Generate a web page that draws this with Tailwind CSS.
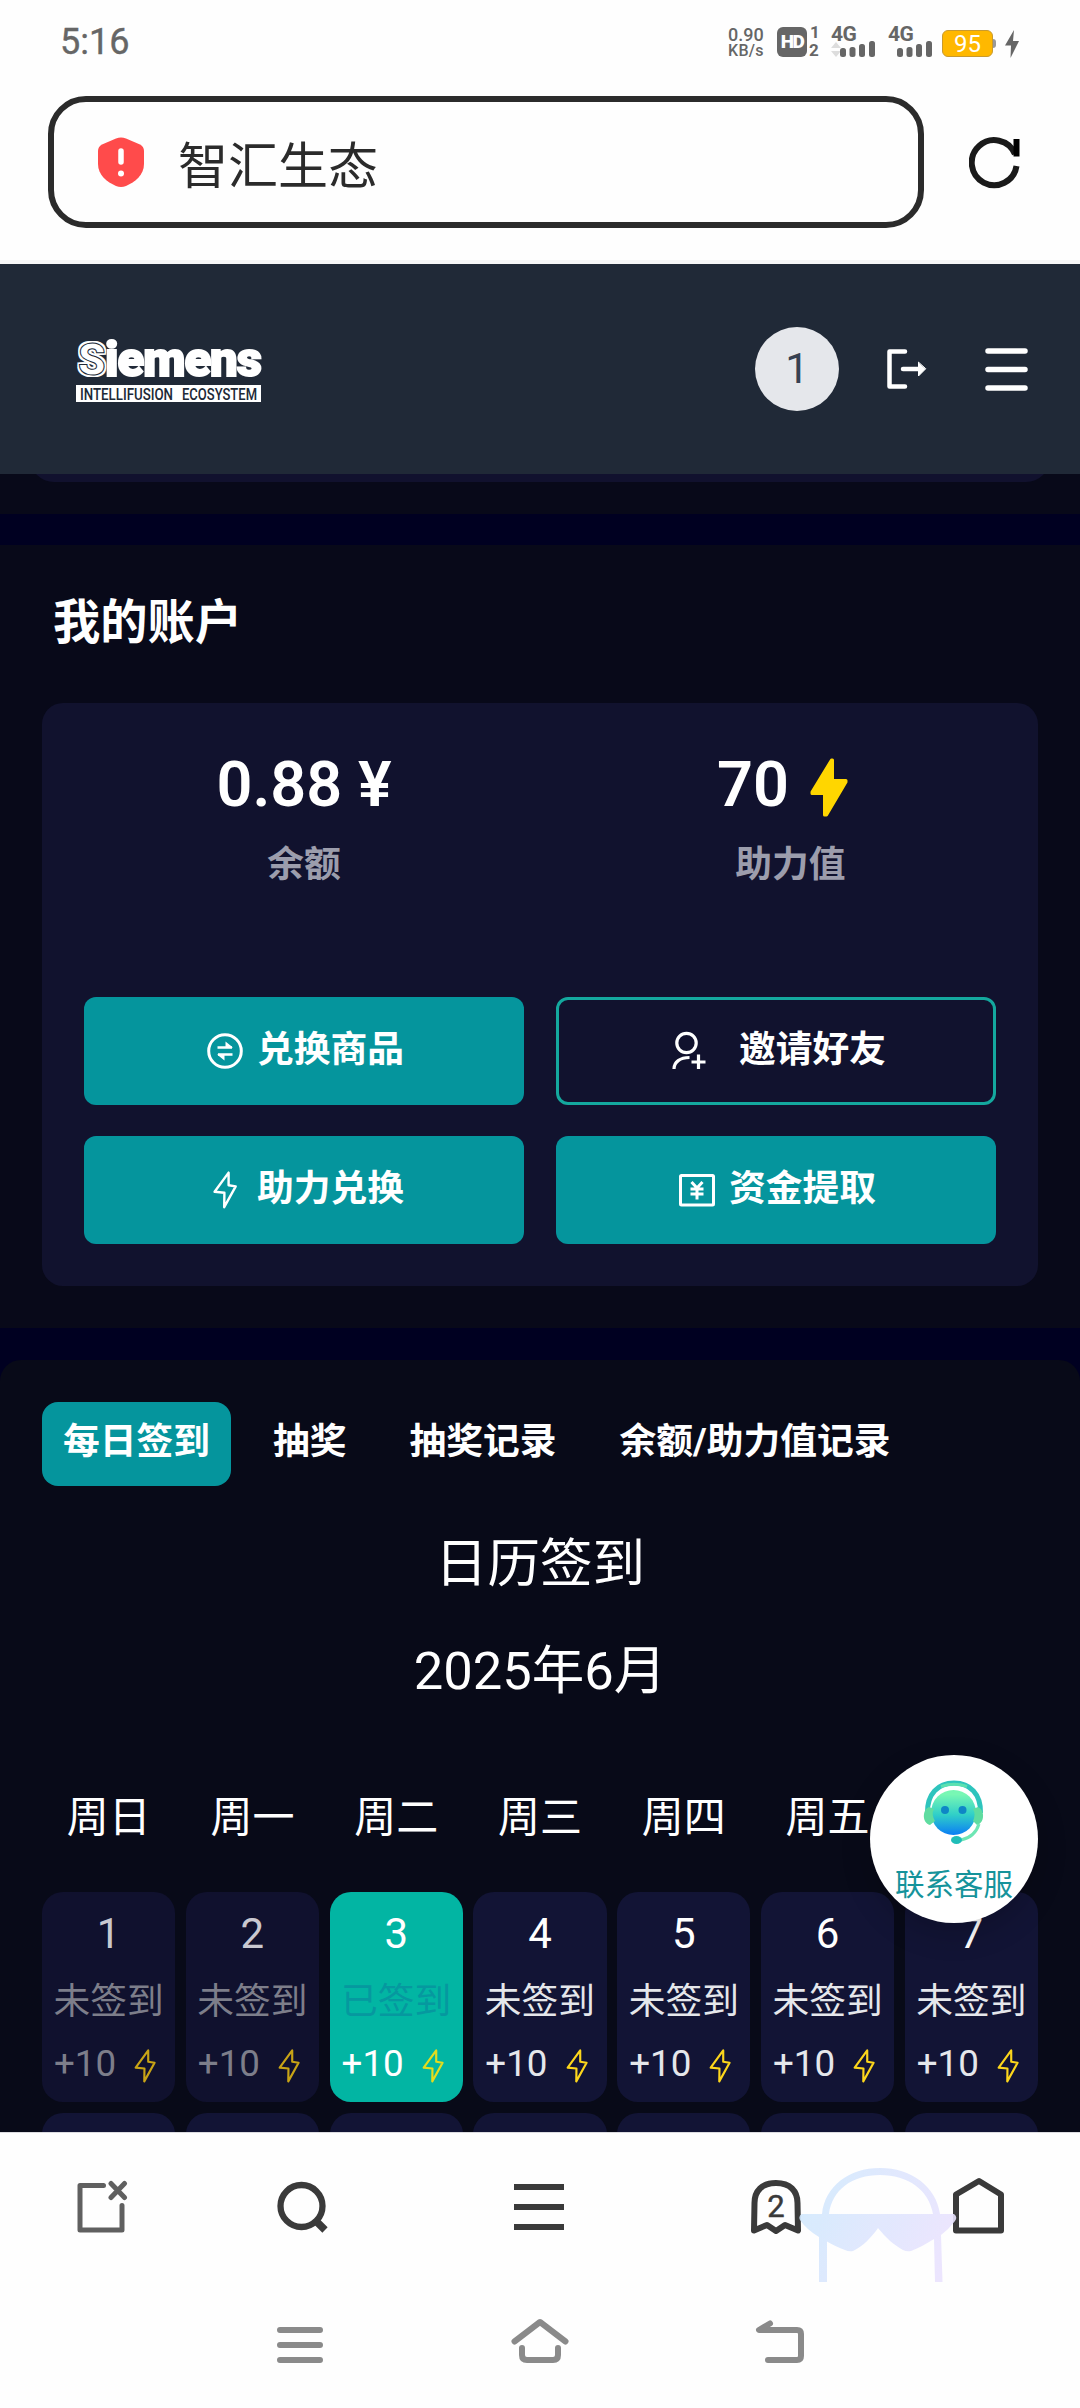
<!DOCTYPE html>
<html lang="zh-CN">
<head>
<meta charset="utf-8">
<title>智汇生态</title>
<script src="https://cdn.jsdelivr.net/npm/@tailwindcss/browser@4"></script>
</head>
<body class="w-[1080px] h-[2408px] overflow-hidden bg-[#fefefe] font-['Roboto','Noto_Sans_CJK_SC',sans-serif] text-white flex flex-col relative">
<svg class="hidden">
  <symbol id="bolt" viewBox="0 0 24 38"><path d="M15.6 1.6V14.2L22.7 15.4 11.2 36.2 11.4 21.8 1.6 20.8Z" fill="none" stroke="currentColor" stroke-width="2.4" stroke-linejoin="round"/></symbol>
</svg>

<!-- status bar -->
<div class="h-24 shrink-0 flex text-[#666]">
  <div class="w-[728px] pl-[60px] pt-[21px] text-[36px] leading-[42px] [-webkit-text-stroke:0.400px_#666]">5:16</div>
  <div class="w-[49px] pt-[25px] font-medium text-[18px] leading-[19px] whitespace-nowrap">0.90<div class="text-[16px] leading-[14px] tracking-[0.3px]">KB/s</div></div>
  <div class="w-[30px] h-[30px] mt-[27px] rounded-[6px] bg-[#666] text-[#fefefe] font-black text-[19px] leading-[30px] text-center tracking-[-1.500px]">HD</div>
  <div class="w-[24px] pl-[2px] pt-[23px] font-bold text-[17px] leading-[18px]"><span class="pl-[1px]">1</span><div class="leading-[18px]">2</div></div>
  <div class="w-[57px] mt-[25px] relative font-bold text-[21px] leading-[19px] tracking-[-0.5px]">4G
    <svg class="absolute left-0 top-[16px]" width="46" height="18" fill="#666"><path d="M0 7l5-6 5 6zM0 10h10l-5 6z" fill="#ddd"/><rect x="9" y="7" width="6" height="9" rx="2.5"/><rect x="18.500" y="6" width="6" height="10" rx="2.500"/><rect x="28" y="3" width="6" height="13" rx="2.500"/><rect x="38" y="0" width="6" height="16" rx="2.500"/></svg>
  </div>
  <div class="w-[54px] mt-[25px] relative font-bold text-[21px] leading-[19px] tracking-[-0.5px]">4G
    <svg class="absolute left-0 top-[16px]" width="46" height="18" fill="#666"><rect x="9" y="7" width="6" height="9" rx="2.500"/><rect x="18.500" y="6" width="6" height="10" rx="2.500"/><rect x="28" y="3" width="6" height="13" rx="2.500"/><rect x="38" y="0" width="6" height="16" rx="2.500"/></svg>
  </div>
  <div class="w-[51px] h-[27px] mt-[30px] rounded-[6px] bg-[#ffb800] border border-[#c99a2e] text-white text-[24px] leading-[26px] text-center">95</div>
  <div class="w-[3px] h-[9px] mt-[39px] rounded-r-[3px] bg-[#999]"></div>
  <svg class="mt-[30px] ml-[9px]" width="15" height="28" fill="#666"><path d="M9 0L0 15.500H6L5.500 28 14 11H8Z"/></svg>
</div>

<!-- address bar -->
<div class="h-[168px] shrink-0 flex pl-12 border-b-[4px] border-[#f6f6f6]">
  <div class="w-[876px] h-[132px] border-[6px] border-[#2b2b2b] rounded-[38px] flex items-center pl-[44px]">
    <svg width="46" height="52" viewBox="0 0 46 52"><path d="M18 2.500Q23 .5 28 2.500L42 8.500Q46 10.500 46 15V28C46 39 37 46 28 50Q23 52 18 50C9 46 0 39 0 28V15Q0 10.500 4 8.500Z" fill="#ff4b4b"/><path d="M23 15v11" stroke="#fff" stroke-width="5.500" stroke-linecap="round"/><circle cx="23" cy="37.500" r="3" fill="#fff"/></svg>
    <div class="ml-[34px] mt-[9px] text-[50px] leading-[60px] text-[#2b2b2b]">智汇生态</div>
  </div>
  <svg class="ml-[45px] mt-[40px]" width="54" height="54" fill="none" stroke="#1a1a1a" stroke-width="6"><path d="M46 18A22.500 22.500 0 1 0 47.500 30"/><path d="M47.500 3V20.500" stroke="#000"/></svg>
</div>

<!-- site header -->
<header class="h-[210px] shrink-0 bg-[#202937] flex items-center">
  <div class="w-[185px] ml-[76px] flex flex-col mt-[4px]">
    <div class="h-[40px] flex items-end whitespace-nowrap leading-[40px] font-black">
      <span class="w-[29px] pl-[2px] h-[40px] inline-block text-[44px] [-webkit-text-stroke:1px_#202937] [text-shadow:2px_0_#fff,-2px_0_#fff,0_2px_#fff,0_-2px_#fff,2px_2px_#fff,-2px_-2px_#fff,2px_-2px_#fff,-2px_2px_#fff]">S</span>
      <span class="h-[40px] text-[49px] tracking-[-1px] [-webkit-text-stroke:2px_#fff]">iemens</span>
    </div>
    <svg class="mt-[5px] overflow-visible" width="185" height="17"><rect width="185" height="17" fill="#fff"/><text x="4" y="14.500" font-size="16.500" font-weight="500" fill="#202937" textLength="93" lengthAdjust="spacingAndGlyphs">INTELLIFUSION</text><text x="106" y="14.500" font-size="16.500" font-weight="500" fill="#202937" textLength="75" lengthAdjust="spacingAndGlyphs">ECOSYSTEM</text></svg>
  </div>
  <div class="ml-[494px] w-[84px] h-[84px] rounded-full bg-[#e5e7eb] text-[#374151] text-[42px] leading-[83px] text-center">1</div>
  <svg class="ml-[46px]" width="44" height="44" fill="none" stroke="#fff" stroke-width="4.500" stroke-linecap="round" stroke-linejoin="round"><path d="M20 4.500H4.500V39.500H20M18 22H34"/><path d="M33.500 15.500V29L40.500 22Z" fill="#fff" stroke-width="1"/></svg>
  <svg class="ml-[56px]" width="46" height="46" stroke="#fff" stroke-width="5.500" stroke-linecap="round"><path d="M3 5H40M3 23.500H40M3 42H40"/></svg>
</header>

<main class="h-[1658px] shrink-0 overflow-hidden bg-[#000021]">
  <div class="h-[40px] bg-[#080919] px-[30px]"><div class="h-[8px] overflow-hidden flex flex-col justify-end"><div class="h-[60px] shrink-0 rounded-[24px] bg-[#11112e]"></div></div></div>

  <!-- account -->
  <section class="mt-[31px] h-[783px] bg-[#080919] px-[42px] pt-[48px]">
    <h2 class="pl-[11px] h-[110px] text-[47.250px] leading-[60px] font-bold">我的账户</h2>
    <div class="h-[583px] rounded-[21px] bg-[#11122e] px-[42px] pt-[42px]">
      <div class="h-[252px] flex text-center">
        <div class="w-[440px] font-semibold">
          <div class="pt-[2px] text-[63px] leading-[76px] whitespace-nowrap">0.88 ¥</div>
          <div class="mt-[14px] text-[36.750px] leading-[56px] font-bold text-[#9c9dac]">余额</div>
        </div>
        <div class="w-[440px] ml-[32px] font-semibold">
          <div class="pt-[2px] text-[63px] leading-[76px] flex items-center justify-center pl-[13px]">70<svg class="ml-[21px] mt-[5px]" width="38" height="60" fill="#ffd600" stroke="#ffd600" stroke-width="3" stroke-linejoin="round"><path d="M21.500 2L2 34V35.500H14.500V57H16.500L36 24V22.500H22.500V2Z"/></svg></div>
          <div class="mt-[14px] pl-[29px] text-[36.750px] leading-[56px] font-bold text-[#9c9dac]">助力值</div>
        </div>
      </div>
      <div class="grid grid-cols-2 gap-x-8 gap-y-[31px] text-[36.750px] font-bold leading-[105px] whitespace-nowrap">
        <div class="h-[108px] rounded-[12px] bg-[#05959d] flex pl-[123px]"><svg class="mt-[36px] mr-[14px]" width="36" height="36" fill="none" stroke="#fff" stroke-width="3"><circle cx="18" cy="18" r="16.300"/><path d="M10.500 14.500H25M11 21.500H25.500" stroke-width="2.400"/><path d="M18.500 8.500V14.500H26ZM17.500 27.500V21.500H10Z" fill="#fff" stroke="none"/></svg>兑换商品</div>
        <div class="h-[108px] rounded-[12px] border-[3px] border-[#14a89e] flex pl-[113px] leading-[99px]"><svg class="mt-[31px] mr-[33px]" width="34" height="38" fill="none" stroke="#fff" stroke-width="3.200"><circle cx="14.500" cy="12" r="9.700"/><path d="M2 38C2 31 8 26.500 17.500 26.500M26.500 23.500V38M19.500 31H33.500"/></svg>邀请好友</div>
        <div class="h-[108px] rounded-[12px] bg-[#05959d] flex pl-[129px] leading-[106px]"><svg class="mt-[35px] mr-[20px]" width="24" height="38"><use href="#bolt"/></svg>助力兑换</div>
        <div class="h-[108px] rounded-[12px] bg-[#05959d] flex pl-[123px] leading-[106px]"><svg class="mt-[38px] mr-[14px]" width="36" height="33" fill="none" stroke="#fff" stroke-width="3"><rect x="1.500" y="1.500" width="33" height="29.500" rx="1"/><path d="M12.500 8L18 14 23.500 8M11.500 15H24.500M11.500 20H24.500M18 14V25.500"/></svg>资金提取</div>
      </div>
    </div>
  </section>

  <!-- check-in -->
  <section class="mt-[32px] h-[900px] bg-[#080a18] rounded-t-[21px] px-[42px] pt-[42px]">
    <div class="h-[84px] flex gap-[21px] text-[36.750px] font-bold leading-[79px] whitespace-nowrap">
      <div class="px-[21px] rounded-[16px] bg-[#05959d]">每日签到</div>
      <div class="px-[21px]">抽奖</div>
      <div class="px-[21px]">抽奖记录</div>
      <div class="px-[21px]">余额/助力值记录</div>
    </div>
    <div class="mt-[41px] text-center text-[52.500px] leading-[74px]">日历签到</div>
    <div class="mt-[33px] text-center text-[52.500px] leading-[74px]">2025年6月</div>
    <div class="mt-[78px] grid grid-cols-7 gap-x-[10.500px] h-[106px] text-[42px] leading-[63px] text-center">
      <div>周日</div><div>周一</div><div>周二</div><div>周三</div><div>周四</div><div>周五</div><div>周六</div>
    </div>
    <div id="days" class="grid grid-cols-7 gap-x-[10.500px] gap-y-[11px] text-center whitespace-nowrap"></div>
  </section>
</main>

<!-- browser toolbar -->
<div class="h-[168px] shrink-0 border-t border-[#dcdce0] flex items-start">
  <svg class="ml-[76px] mt-[46px]" width="52" height="58" fill="none" stroke="#606060" stroke-width="5" stroke-linecap="round" stroke-linejoin="round"><path d="M27.500 6.500H4V51H46V26.500M35 4.500L48.500 18.500M48.500 4.500L35 18.500"/></svg>
  <svg class="ml-[149px] mt-[46px]" width="54" height="58" fill="none" stroke="#3a3a3a" stroke-width="6.300"><circle cx="24.500" cy="27" r="21"/><path d="M38 41L48 51" stroke-width="7.500"/></svg>
  <svg class="ml-[183px] mt-[51px]" width="50" height="48" fill="#3a3a3a"><path d="M0 0H50V6H0zM0 20H50V26H0zM0 40H50V46H0z"/></svg>
  <div class="ml-[186px] mt-[45px] w-[52px] h-[58px] relative text-[#3a3a3a] text-[31px] leading-[57px] text-center [-webkit-text-stroke:0.500px_#3a3a3a]">2<svg class="absolute left-0 top-0" width="52" height="58" fill="none" stroke="#3a3a3a" stroke-width="6" stroke-linejoin="round"><path d="M26 5C12 5 4.500 13 4.500 25L4 52.500 17 47 26 53 35 47 48 52.500 47.500 25C47.500 13 40 5 26 5Z"/></svg></div>
  <svg class="ml-[150px] mt-[43px]" width="54" height="60" fill="none" stroke="#3a3a3a" stroke-width="6" stroke-linejoin="round"><path d="M27 5L49 18.500V54.500H4V18.500Z"/></svg>
</div>

<!-- system navigation -->
<div class="h-[108px] shrink-0 flex items-start pl-[274px] text-[#8a8a8a]">
  <svg class="mt-[17px]" width="52" height="50" stroke="currentColor" stroke-width="6" stroke-linecap="round"><path d="M6 13H46M6 28H46M6 43H46"/></svg>
  <svg class="ml-[182px] mt-[17px]" width="64" height="50" fill="none" stroke="currentColor" stroke-width="6" stroke-linecap="round" stroke-linejoin="round"><path d="M6.500 24.500L32 5 57.500 24.500M14 31V38Q14 43 19 43H45Q50 43 50 38V31"/></svg>
  <svg class="ml-[180px] mt-[17px]" width="56" height="50" fill="none" stroke="currentColor" stroke-width="6" stroke-linecap="round" stroke-linejoin="round"><path d="M18 6.500L7 13H45Q49 13 49 17V39Q49 43 45 43H16"/></svg>
</div>

<!-- floating mask figure over the toolbar -->
<svg class="absolute left-[799px] top-[2166px]" width="158" height="122"><defs><linearGradient id="mk" x1="0" y1="0" x2="158" y2="70" gradientUnits="userSpaceOnUse"><stop offset=".1" stop-color="#d2e9fd"/><stop offset="1" stop-color="#ebe3fe"/></linearGradient></defs>
  <g opacity=".9"><path d="M23 48C26 20 50 2 81 2S137 20 141 48H134C130 24 109 9 81 9S33 24 30 48Z" fill="url(#mk)"/><path d="M3 48H155Q159 51 156 55 150 63 142 69L143.500 116H136L135 73C127 78 120 82 112 85Q108 86 104 84C95 79 87 72 79 62 72 72 64 80 54 85Q50 86 46 84C40 82 34 79 28 75.500V116H20V71Q8 64 1 54 -1 50 3 48Z" fill="url(#mk)"/></g>
</svg>

<!-- support button -->
<div class="absolute left-[870px] top-[1755px] w-[168px] h-[168px] rounded-full bg-white flex flex-col items-center shadow-[0_10px_30px_rgba(0,0,0,0.2)]">
  <svg class="mt-[24px]" width="64" height="66" fill="none"><defs><linearGradient id="face" x1="0" y1="0" x2="0" y2="1"><stop offset=".1" stop-color="#78f7b4"/><stop offset=".55" stop-color="#30cfc8"/><stop offset="1" stop-color="#0a7df5"/></linearGradient></defs>
    <path d="M5.500 34C5 15 16 4 32 4S59 15 58.500 34" stroke="#2ec4bd" stroke-width="5"/><path d="M19 7.500Q32 3 45 7.500" stroke="#5ce0b0" stroke-width="3"/>
    <circle cx="31.500" cy="33.500" r="22.500" fill="url(#face)"/>
    <path d="M7 28C0 31 0 44 8 46L13 42Q9 35 12 30ZM56 28C63 31 63 44 55 46L51 42Q54 35 51 30Z" fill="#5fdca0"/>
    <circle cx="23" cy="31" r="4" fill="#0e86c6"/><circle cx="40.500" cy="31" r="4" fill="#0e86c6"/>
    <path d="M57 45Q53 58 39 61" stroke="#6ee6b4" stroke-width="3"/><ellipse cx="34.500" cy="61" rx="5.500" ry="4" fill="#20bdb8"/></svg>
  <div class="mt-[18px] text-[29.500px] leading-[44px] text-[#15939b] whitespace-nowrap">联系客服</div>
</div>

<script>
const tone = {
  past:   ['bg-[#10112e]', 'text-[#c9c8d0]', 'text-[#7d7e8a]', 'text-[#7d7e8a]', 'text-[#c8a416]'],
  today:  ['bg-[#02b5a3]', 'text-white', 'text-[#06989f]', 'text-white', 'text-[#e3dc1e]'],
  future: ['bg-[#121435]', 'text-white', 'text-[#e5e7eb]', 'text-[#e5e7eb]', 'text-[#fcd61c]']
};
let html = '';
for (let d = 1; d <= 14; d++) {
  const t = tone[d < 3 ? 'past' : d === 3 ? 'today' : 'future'];
  html += `<div class="h-[210px] rounded-[21px] pt-[10px] ${t[0]}">` + (d > 7 ? '' :
    `<div class="text-[42px] leading-[63px] ${t[1]}">${d}</div>
     <div class="mt-[9px] -mx-1 text-[36.750px] leading-[56px] ${t[2]}">${d === 3 ? '已' : '未'}签到</div>
     <div class="mt-[6px] pl-[12px] flex text-[36.750px] leading-[56px] ${t[3]}">+10<svg class="ml-[18px] mt-[13px] ${t[4]}" width="22" height="34"><use href="#bolt"/></svg></div>`) + '</div>';
}
document.getElementById('days').innerHTML = html;
</script>
</body>
</html>
